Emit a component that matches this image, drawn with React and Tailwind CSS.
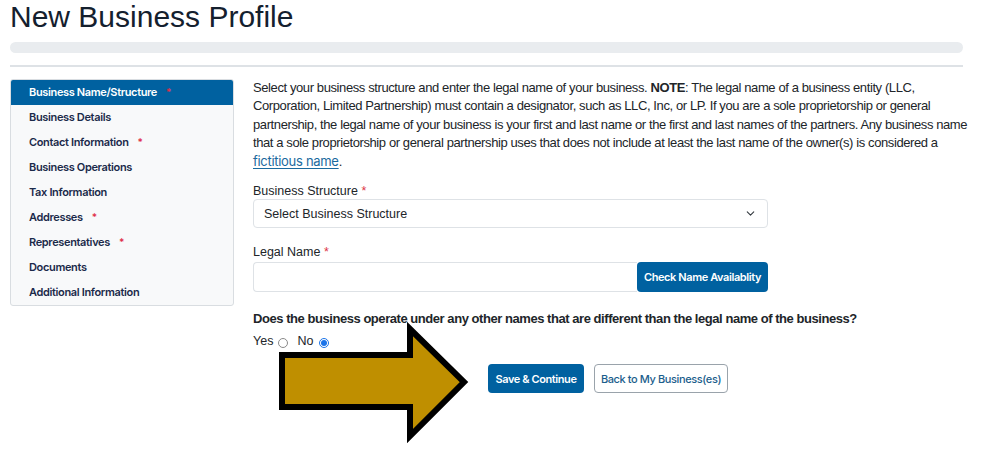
import { ChevronDown } from "lucide-react";

const steps = [
  { label: "Business Name/Structure", required: true, active: true },
  { label: "Business Details" },
  { label: "Contact Information", required: true },
  { label: "Business Operations" },
  { label: "Tax Information" },
  { label: "Addresses", required: true },
  { label: "Representatives", required: true },
  { label: "Documents" },
  { label: "Additional Information" },
];

const arial = "font-['Liberation_Sans',Arial,sans-serif]";
const jakarta = "font-['Inter','Noto_Sans',sans-serif]";

const Radio = ({ checked }) => (
  <span
    className={`inline-flex items-center justify-center w-[10px] h-[10px] rounded-full border ${
      checked ? "border-[#1a73e8]" : "border-[#8a8a8a]"
    } bg-white`}
  >
    {checked && <span className="w-[6px] h-[6px] rounded-full bg-[#1a73e8]" />}
  </span>
);

const App = () => {
  return (
    <div className={`relative w-[983px] h-[457px] bg-white overflow-hidden ${arial}`}>
      {/* titulo */}
      <h1 className="pl-[10px] text-[30px] leading-[34px] text-[#14202e]">New Business Profile</h1>

      <div className="ml-[10px] mr-[20px]">
        <div className="mt-[8px] h-[11px] rounded-full bg-[#e9ecef]" />
        <div className="mt-[12px] h-[2px] bg-[#dee2e6]" />

        <div className="mt-[12px] flex gap-[19px]">
          {/* menu lateral */}
          <div className="w-[224px] shrink-0 self-start border border-[#d9dde1] rounded-[3px] bg-[#f8f9fa] overflow-hidden">
            {steps.map((s) => (
              <div
                key={s.label}
                className={`h-[25px] flex items-center pl-[18px] text-[11px] font-semibold tracking-[-0.35px] ${jakarta} ${
                  s.active ? "bg-[#0061a0] text-white" : "text-[#1b2a4a]"
                }`}
              >
                {s.label}
                {s.required && <span className="ml-[9px] text-[#e0314b] text-[10px]">*</span>}
              </div>
            ))}
          </div>

          {/* contenido */}
          <div className="flex-1 min-w-0">
            <p className="whitespace-nowrap text-[13px] leading-[18.3px] tracking-[-0.4px] text-[#212529]">
              Select your business structure and enter the legal name of your business. <b>NOTE</b>: The legal name of a
              business entity (LLC,
              <br />
              Corporation, Limited Partnership) must contain a designator, such as LLC, Inc, or LP. If you are a sole
              proprietorship or general
              <br />
              partnership, the legal name of your business is your first and last name or the first and last names of the
              partners. Any business name
              <br />
              that a sole proprietorship or general partnership uses that does not include at least the last name of the
              owner(s) is considered a
              <br />
              <a href="#" className={`text-[#1a6a9e] underline underline-offset-2 tracking-[-0.3px] ${jakarta}`}>
                fictitious name
              </a>
              .
            </p>

            <div className="w-[515px]">
              <label className="block mt-[13px] text-[12.5px] leading-[15px] text-[#212529]">
                Business Structure <span className="text-[#dc3545]">*</span>
              </label>
              <div className="h-[29px] flex items-center justify-between px-[10px] border border-[#dee2e6] rounded-[4px] text-[12.5px] text-[#212529]">
                <span>Select Business Structure</span>
                <ChevronDown size={13} strokeWidth={2} className="text-[#343a40]" />
              </div>

              <label className="block mt-[17px] text-[12.5px] leading-[15px] text-[#212529]">
                Legal Name <span className="text-[#dc3545]">*</span>
              </label>
              <div className="mt-[2px] flex h-[30px]">
                <input className="flex-1 border border-[#dee2e6] rounded-l-[4px] border-r-0 outline-none" />
                <button
                  className={`w-[131px] rounded-[4px] bg-[#0061a0] text-white text-[11px] font-semibold tracking-[-0.4px] ${jakarta}`}
                >
                  Check Name Availablity
                </button>
              </div>
            </div>

            <div className="mt-[19px] whitespace-nowrap text-[13px] leading-[15px] font-bold tracking-[-0.45px] text-[#212529]">
              Does the business operate under any other names that are different than the legal name of the business?
            </div>
            <div className="mt-[8px] flex items-center text-[12.5px] leading-[15px] text-[#212529]">
              <span>Yes</span>
              <span className="ml-[5px] mt-[3px] flex">
                <Radio />
              </span>
              <span className="ml-[9px]">No</span>
              <span className="ml-[6px] mt-[3px] flex">
                <Radio checked />
              </span>
            </div>

            <div className={`mt-[15px] flex justify-center gap-[10px] ${jakarta}`}>
              <button className="w-[96px] h-[29px] rounded-[4px] bg-[#0061a0] text-white text-[11px] font-semibold tracking-[-0.4px]">
                Save &amp; Continue
              </button>
              <button className="w-[134px] h-[29px] rounded-[4px] border border-[#9aa3ab] bg-white text-[#1b5e8c] text-[11px] font-medium tracking-[-0.4px]">
                Back to My Business(es)
              </button>
            </div>
          </div>
        </div>
      </div>

      {/* flecha sobrepuesta */}
      <svg className="absolute left-[274px] top-[318px]" width="200" height="130" viewBox="274 318 200 130">
        <polygon
          points="282,355 410,355 410,329 464,382 410,436 410,407 282,407"
          fill="#bf8f00"
          stroke="#000"
          strokeWidth="6"
          strokeLinejoin="miter"
        />
      </svg>
    </div>
  );
};

export default App;
